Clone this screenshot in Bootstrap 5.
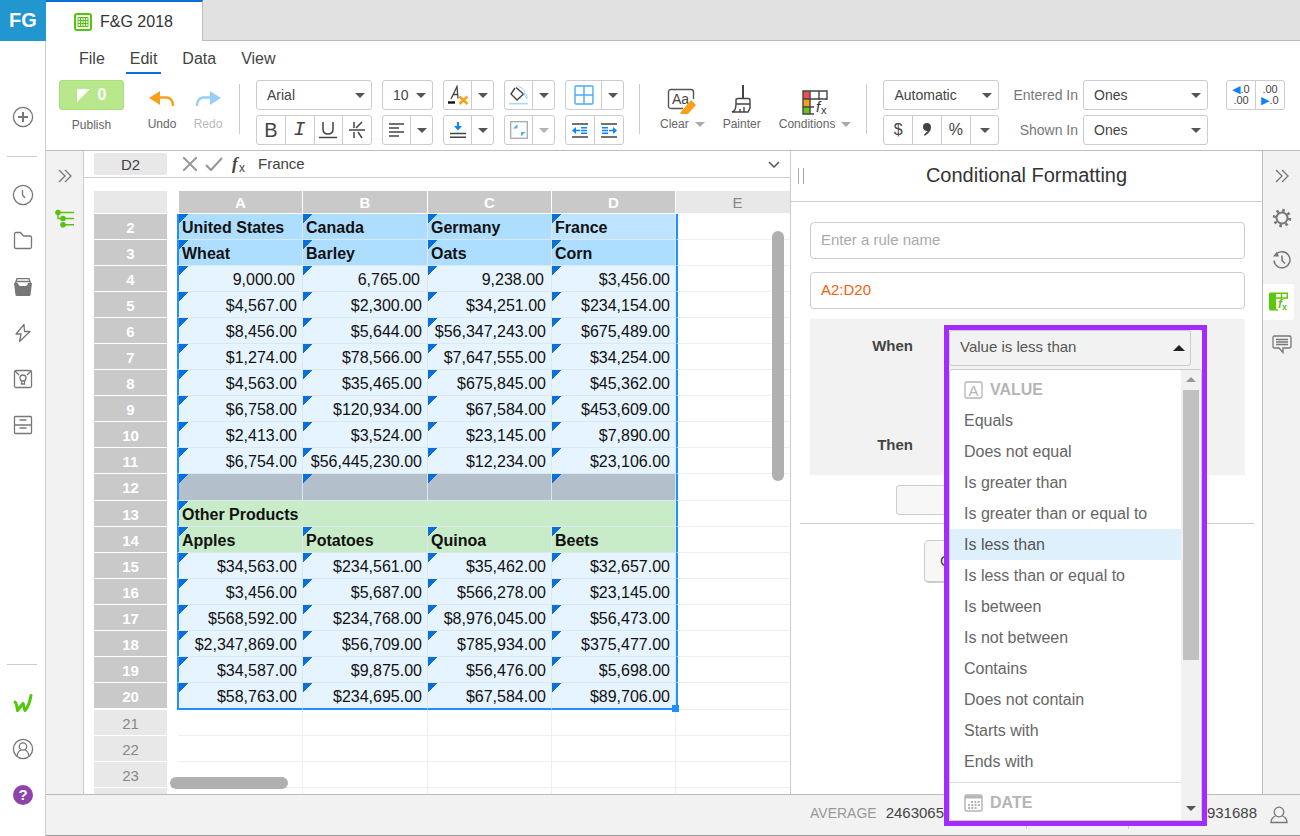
<!DOCTYPE html>
<html lang="en">
<head>
<meta charset="utf-8">
<meta name="viewport" content="width=device-width, initial-scale=1">
<title>F&amp;G 2018</title>
<link href="https://cdn.jsdelivr.net/npm/bootstrap@5.3.0/dist/css/bootstrap.min.css" rel="stylesheet">
<style>
body{font-family:"Liberation Sans",Arial,sans-serif;font-size:14px;line-height:20px;color:#444;background:#fff}
svg{display:block;flex:none}
.line-ico{fill:none;stroke:#777;stroke-width:1.3}
button,a.slot{border:0;background:none;padding:0;color:inherit;text-decoration:none}
/* left navigation */
.nav-rail{width:46px;border-right:1px solid #ccc;flex:none}
.brand-box{height:41px;background:#2196cf;color:#fff;font-size:20px;font-weight:700;margin-right:-1px;padding-bottom:2px}
.slot{height:46px;display:flex;align-items:center;justify-content:center}
.nav-rail .gap-top{margin-top:53px}
.rail-line{width:30px;height:1px;background:#ccc;margin:16px auto 15px 7px;flex:none}
.rail-foot{height:18px;flex:none}
/* tabs and menu */
.tab-strip{background:#e1e1e1;height:41px;border-bottom:1px solid #bbb}
.doc-tab{width:157px;height:41px;background:#fff;border-top:2px solid #0a6fd8;border-right:1px solid #bbb;font-size:16px;padding-left:28px;gap:8px;color:#333}
.menu-row{height:39px;padding-left:33px;gap:25px;font-size:16px;color:#444}
.menu-row a{color:inherit;text-decoration:none;height:31px;line-height:36px}
.menu-row a.current{box-shadow:0 2px 0 #0a6fd8;padding:0 4px;margin:0 -4px}
/* toolbar */
.tools{height:71px;padding-left:13px;border-bottom:1px solid #bfbfbf;gap:10px}
.pair{display:flex;flex-direction:column;gap:5px}
.tool-select,.tool-group{height:30px;border:1px solid #ccc;border-radius:3px;background-color:#fff}
.tool-select{appearance:none;font-size:14px;color:#444;padding:0 10px;background-image:url("data:image/svg+xml,%3Csvg xmlns='http://www.w3.org/2000/svg' width='10' height='5'%3E%3Cpath fill='%23555' d='M0 0h10L5 5z'/%3E%3C/svg%3E");background-repeat:no-repeat;background-position:right 6px center}
.tool-group{display:flex}
.tool-group button{flex:1 1 0;display:flex;align-items:center;justify-content:center;border-right:1px solid #ccc}
.tool-group button:last-child{border-right:0}
.tool-group .drop{flex:0 0 21px}
.w-115{width:116px}.w-50px{width:51px}.w-58{width:59px}.w-124{width:125px}
.caret{width:0;height:0;border:5px solid transparent;border-top-color:#555;border-bottom:0}
.faded{opacity:.45}
.tool-rule{width:1px;height:50px;background:#ccc;margin:4px 6px 0 5px}
.publish{width:65px;height:30px;border-radius:3px;background:#b9e78c;color:#fff;font-weight:700;font-size:16px;gap:8px;border:1px solid #a9de78;margin-bottom:7px}
.cap{font-size:12px;line-height:16px;color:#666}
.cap-drop{gap:6px}
.big-tool{display:flex;flex-direction:column;align-items:center}
.big-tool.step{padding-top:9px;width:32px}
.big-tool.step .cap{margin-top:9px}
.glyph{font-size:20px;color:#444}
.mono{font-family:"Liberation Mono",monospace}
.dec{font-size:11px;line-height:11px;flex-direction:column}
.azure{color:#0a84ff}
.pair label{height:30px;padding-top:5px;color:#777}
.pair.joined{margin-left:-5px}
/* work area */
.side-rail{width:38px;background:#f2f2f2;border-right:1px solid #ccc;flex:none}
.side-rail .slot{height:42px}
.right-rail{width:38px;background:#f2f2f2;border-left:1px solid #bbb;padding-top:4px;flex:none}
.right-rail .slot{height:42px}
.right-rail .lit{background:#fff;width:31px;height:36px;margin:3px 6px 3px 0;border-radius:0 3px 3px 0}
.formula{height:28px;border-bottom:1px solid #ccc;padding:0 10px 0 10px;font-size:15px}
.cell-name{width:73px;height:22px;background:#e8e8e8;border:0;border-radius:2px;text-align:center;color:#444;font-size:15px}
.formula-text{border:0;font-size:15px;color:#444;padding:0 0 0 7px;outline:0;min-width:0}
.sheet-box{position:relative;overflow:hidden;padding:13px 0 0 10px}
.sheet{table-layout:fixed;border-collapse:separate;border-spacing:0;width:calc(100% + 10px);font-size:16px;line-height:22px;color:#111}
.sheet th,.sheet td{height:26px;padding:2px 0 0;white-space:nowrap;overflow:hidden;border:0 solid #fff;border-bottom-width:1px;border-right-width:1px}
.sheet th{background:#c9c9c9;color:#fff;font-size:15px;font-weight:700;text-align:center;background-clip:padding-box}
.sheet thead th{height:23px;line-height:20px}
.sheet th.rownum{border-right:10px solid #fff;border-bottom-width:1px}
.sheet th.plain{background-color:#e8e8e8;color:#888;font-weight:400}
.sheet .c-row{width:83px}.sheet .c-a{width:126px}.sheet .c-b{width:125px}.sheet .c-c{width:124px}
.sheet thead th.first{border-left:2px solid #fff}
.sheet td{border-color:#efefef}
.sheet td.first{border-left:2px solid #fff}
.sheet .pick td{border-color:#dbe8f2;text-align:right;padding-right:5px;background-color:#e6f4ff}
.sheet .pick td.mark-tl{background-image:linear-gradient(135deg,#0a6fd8 50%,transparent 51%);background-size:10px 9px;background-repeat:no-repeat}
.sheet .pick td.first{border-left-color:#1e90ff}
.sheet .pick td.edge{background:none;border-left:2px solid #1e90ff;border-color:#efefef #efefef #efefef #1e90ff}
.sheet .bare td{padding-right:7px}
.sheet .bare td:nth-child(5){padding-right:5px}
.sheet .heading td{text-align:left;font-weight:700;padding:2px 0 0 3px}
.sheet .blue td{background-color:#addeff}
.sheet .blue td.active-cell{background-color:#bfe4ff}
.sheet .green td{background-color:#c8ebc8}
.sheet .grey td{height:27px;background-color:#b3bfcb}
.sheet .end td:not(.edge){border-bottom:2px solid #1e90ff}
.sheet .end td:nth-child(5){position:relative;overflow:visible}
.sheet .end>*{height:27px}
.sheet .end th{border-bottom-width:2px}
.handle{position:absolute;right:-4px;bottom:-4px;width:7px;height:7px;background:#1e90ff}
.bar-v{position:absolute;right:6px;top:53px;width:12px;height:250px;border-radius:6px;background:#b0b0b0}
.bar-h{position:absolute;left:86px;bottom:5px;width:118px;height:12px;border-radius:6px;background:#b0b0b0}
/* rule panel */
.rule-panel{width:472px;border-left:1px solid #ccc;flex:none}
.panel-title{height:51px;border-bottom:1px solid #ccc;font-size:20px;color:#333;position:relative;padding-bottom:3px}
.grip{position:absolute;left:7px;top:17px;width:6px;height:16px;border:solid #aaa;border-width:0 1px}
.rule-body{padding:20px 17px 0 19px}
.rule-field{height:37px;font-size:15px;border:1px solid #ccc;border-radius:4px;padding:0 10px 2px;margin-bottom:13px;color:#444}
.rule-field::placeholder{color:#aaa}
.rule-field.range{color:#f4600c;margin-bottom:10px}
.rule-set{height:156px;background:#f2f2f2;position:relative;font-size:15px;font-weight:700;color:#444;padding:17px 332px 0 0;text-align:right}
.rule-set label{display:block;margin-bottom:79px}
.chooser{position:absolute;left:134px;top:6px;width:263px;border:5px solid #a32bff;background:#f2f2f2;z-index:5;font-weight:400;text-align:left}
.chooser-select{appearance:none;display:block;width:242px;height:36px;font-size:15px;color:#555;border:1px solid #ccc;border-radius:3px;padding:0 10px 2px;background:#f2f2f2 url("data:image/svg+xml,%3Csvg xmlns='http://www.w3.org/2000/svg' width='12' height='6'%3E%3Cpath fill='%23222' d='M0 6h12L6 0z'/%3E%3C/svg%3E") no-repeat right 5px center}
.chooser-list{margin-top:3px;border:1px solid #ccc;border-radius:3px;background:#fff;font-size:16px;color:#666;height:452px;overflow:hidden}
.chooser-list ul{padding:4px 0 0}
.chooser-list li>button{display:block;width:100%;height:31px;line-height:31px;padding-left:14px;text-align:left}
.chooser-list li>button.chosen{background:#dff0fd;color:#555}
.kind{height:31px;font-weight:700;font-size:16px;color:#b5b5b5;padding-left:14px;gap:7px}
.kind.second{border-top:1px solid #ddd;margin-top:5px;height:40px}
.mini-bar{width:20px;background:#f1f1f1;padding:7px 2px 9px;flex:none}
.mini-thumb{width:16px;height:270px;background:#c1c1c1;margin-top:8px}
.caret.up{border:5px solid transparent;border-bottom-color:#999;border-top:0}
.add-rule{display:block;height:30px;width:260px;margin:10px auto 8px 86px;border:1px solid #ccc;border-radius:3px;background:#f7f7f7}
.panel-line{height:1px;background:#ccc;margin:0 -9px 16px -10px}
.cancel{display:block;width:98px;height:43px;margin-left:114px;border:1px solid #ccc;border-bottom-width:2px;border-radius:5px;background:#f7f7f7;font-size:15px;padding-left:15px;text-align:left}
/* status */
.status{height:43px;background:#f2f2f2;border-top:1px solid #bbb;border-bottom:1px solid #999;font-size:15px;padding:0 12px 4px 0;color:#444}
.status .tag-name{font-size:14px;color:#999;margin-right:9px}
.stat-a{width:216px}.stat-b{width:102px;height:32px;border-left:1px solid #ccc}.stat-c{width:129px;height:32px;border-left:1px solid #ccc;line-height:32px;text-align:right}
.stat-user{margin:3px 0 0 13px}
.shrinkable{min-width:0;min-height:0}
</style>
</head>
<body>
<div class="vh-100 d-flex overflow-hidden">
  <nav class="nav-rail d-flex flex-column" aria-label="Workspace">
    <div class="brand-box d-flex align-items-center justify-content-center">FG</div>
    <button class="slot gap-top" aria-label="Create"><svg width="22" height="22" class="line-ico" viewBox="0 0 22 22"><circle cx="11" cy="11" r="9.6"/><path d="M11 6v10M6 11h10" stroke-width="2"/></svg></button>
    <div class="rail-line"></div>
    <button class="slot" aria-label="Recent"><svg width="22" height="22" class="line-ico" viewBox="0 0 22 22"><circle cx="11" cy="11" r="9.6"/><path d="M10.5 6v5l2.5 3"/></svg></button>
    <button class="slot" aria-label="Files"><svg width="20" height="20" class="line-ico" viewBox="0 0 20 20"><path d="M1.5 3q0-1.5 1.5-1.5h4.5l3 3.5H17q1.500 0 1.500 1.500V16q0 1.500-1.500 1.500H3q-1.500 0-1.500-1.500z"/></svg></button>
    <button class="slot" aria-label="Library"><svg width="20" height="20" viewBox="0 0 20 20"><path d="M2.500 6l1.500-4.300h12l1.500 4.300M3 4.500h14" class="line-ico"/><path d="M1 6h4q.5 3 2 3h6q1.500 0 2-3h4l-1.500 12q0 1-1.500 1H4q-1.500 0-1.500-1z" fill="#777"/></svg></button>
    <button class="slot" aria-label="Activity"><svg width="18" height="20" class="line-ico" viewBox="0 0 18 20"><path d="M10 1.500L2 11h5l-1.500 7.500L16 8.500h-5.500z" stroke-linejoin="round"/></svg></button>
    <button class="slot" aria-label="Secured"><svg width="20" height="20" class="line-ico" viewBox="0 0 20 20"><rect x="1.500" y="1.500" width="17" height="17" rx="1.500"/><path d="M2 2l4 4M18 2l-4 4M8.500 11.500V15h3v-3.500"/><circle cx="10" cy="9" r="3"/></svg></button>
    <button class="slot" aria-label="Drawers"><svg width="20" height="20" class="line-ico" viewBox="0 0 20 20"><rect x="1.500" y="1.500" width="17" height="17" rx="1"/><path d="M1.500 10h17M6.500 5h7M6.500 13h7"/></svg></button>
    <div class="rail-line mt-auto"></div>
    <button class="slot" aria-label="Home"><svg width="20" height="20" viewBox="0 0 20 20" fill="none" stroke="#4fc90a" stroke-width="3" stroke-linecap="round" stroke-linejoin="round"><path d="M2 9q1.500 1 2.500 8.500L10 10.500l2 7q4-4 6-15"/></svg></button>
    <button class="slot" aria-label="Account"><svg width="22" height="22" class="line-ico" viewBox="0 0 22 22"><circle cx="11" cy="11" r="9.600"/><circle cx="11" cy="8.500" r="3.700"/><path d="M5 18q1-5 4-6M17 18q-1-5-4-6"/></svg></button>
    <button class="slot" aria-label="Help"><svg width="20" height="20" viewBox="0 0 20 20"><circle cx="10" cy="10" r="10" fill="#8e44ad"/><text x="10" y="15" font-size="15" font-weight="700" fill="#fff" text-anchor="middle">?</text></svg></button>
    <div class="rail-foot"></div>
  </nav>

  <div class="flex-grow-1 d-flex flex-column shrinkable">
    <header>
      <div class="tab-strip"><div class="doc-tab d-flex align-items-center">
        <svg width="18" height="18" viewBox="0 0 18 18"><rect x="1" y="1" width="16" height="16" rx="2" fill="none" stroke="#55c40c" stroke-width="2"/><path d="M4 4.500h10v9H4zM4 7.500h10M4 10.500h10M6.500 4.500v9M9 4.500v9M11.500 4.500v9" fill="none" stroke="#55c40c"/></svg>
        <span>F&amp;G 2018</span></div></div>
      <nav class="menu-row d-flex" aria-label="Menu"><a href="#">File</a><a href="#" class="current">Edit</a><a href="#">Data</a><a href="#">View</a></nav>
      <div class="tools d-flex align-items-start">
        <div class="big-tool me-2"><button class="publish d-flex align-items-center justify-content-center"><svg width="13" height="13" viewBox="0 0 13 13"><path d="M0 0h13L0 13z" fill="#fff"/></svg>0</button><span class="cap">Publish</span></div>
        <button class="big-tool step ms-1"><svg width="26" height="18" viewBox="0 0 26 18"><path d="M0 9l11-7v14z" fill="#f9a01b"/><path d="M10 8.500h8q6 1 6 8.500" fill="none" stroke="#f9a01b" stroke-width="2.400"/></svg><span class="cap">Undo</span></button>
        <button class="big-tool step ms-1 faded"><svg width="26" height="18" viewBox="0 0 26 18"><path d="M26 9L15 2v14z" fill="#1a95f5"/><path d="M16 8.500H8q-6 1-6 8.500" fill="none" stroke="#1a95f5" stroke-width="2.400"/></svg><span class="cap">Redo</span></button>
        <div class="tool-rule"></div>
        <div class="pair">
          <select class="tool-select w-115" aria-label="Font"><option>Arial</option></select>
          <div class="tool-group w-115">
            <button class="glyph" aria-label="Bold">B</button>
            <button class="glyph fst-italic mono" aria-label="Italic">I</button>
            <button aria-label="Underline"><svg width="18" height="18" viewBox="0 0 18 18" fill="none" stroke="#444" stroke-width="1.500"><path d="M4 1v7q0 5 5 5t5-5V1M0 16.500h18"/></svg></button>
            <button aria-label="Strikethrough"><svg width="16" height="18" viewBox="0 0 16 18" fill="none" stroke="#444" stroke-width="1.500"><path d="M5 1v6M13 1L7 7M0 9h16M5 11v6M9 11l4 6"/></svg></button>
          </div>
        </div>
        <div class="pair">
          <select class="tool-select w-50px" aria-label="Font size"><option>10</option></select>
          <div class="tool-group w-50px"><button aria-label="Align"><svg width="16" height="14" stroke="#444" stroke-width="1.500"><path d="M0 1h15M0 5h10M0 9h15M0 13h10"/></svg></button><button class="drop" aria-label="Align options"><i class="caret"></i></button></div>
        </div>
        <div class="pair">
          <div class="tool-group w-50px"><button aria-label="Text colour"><svg width="20" height="20" viewBox="0 0 20 20" fill="none"><path d="M3 14L9 1.500l1 12M5.500 9.500h4" stroke="#444" stroke-width="1.300"/><path d="M0 17.500h7" stroke="#111" stroke-width="2.400"/><path d="M11.500 11.500l8 7.500m0-7.500l-8 7.500" stroke="#f9a01b" stroke-width="2.400"/></svg></button><button class="drop" aria-label="Text colours"><i class="caret"></i></button></div>
          <div class="tool-group w-50px"><button aria-label="Vertical align"><svg width="16" height="16" viewBox="0 0 16 16"><path d="M0 11.500h16M0 15.200h16" stroke="#444" stroke-width="1.500"/><path d="M7 0h2v4h3L8 8.500 4 4h3z" fill="#0a84ff"/></svg></button><button class="drop" aria-label="Vertical options"><i class="caret"></i></button></div>
        </div>
        <div class="pair">
          <div class="tool-group w-50px"><button aria-label="Fill"><svg width="20" height="20" viewBox="0 0 20 20" fill="none"><path d="M6 3l-4 6 6 6 6.500-6L7 2.500" stroke="#444" stroke-width="1.400"/><path d="M9 1q5 2 7 6M15 8q4 1 3 6l-3-5z" stroke="#9bd1f7"/><path d="M0 18.700h19" stroke="#a5d8fa" stroke-width="1.500"/></svg></button><button class="drop" aria-label="Fill colours"><i class="caret"></i></button></div>
          <div class="tool-group w-50px"><button aria-label="Merge"><svg width="18" height="18" viewBox="0 0 18 18"><rect x=".7" y=".7" width="16.600" height="16.600" fill="none" stroke="#aaa" stroke-width="1.300"/><path d="M3 7.500L7.500 3v4.500zM11 11h4.500L11 15.500z" fill="#50b3fa"/></svg></button><button class="drop faded" aria-label="Merge options"><i class="caret"></i></button></div>
        </div>
        <div class="pair">
          <div class="tool-group w-58"><button aria-label="Borders"><svg width="20" height="20" viewBox="0 0 20 20" fill="none" stroke="#4aacf5" stroke-width="1.400"><rect x="1" y="1" width="18" height="18" rx="1"/><path d="M10 1v18M1 10h18"/></svg></button><button class="drop" aria-label="Border options"><i class="caret"></i></button></div>
          <div class="tool-group w-58">
            <button aria-label="Outdent"><svg width="16" height="15" viewBox="0 0 16 15"><path d="M0 1h16M0 14h16" stroke="#444" stroke-width="1.500"/><path d="M2 7.500h6M9 4.800h6M9 7.500h6M9 10.200h6" stroke="#0a84ff" stroke-width="1.600"/><path d="M0 7.500L4 4v7z" fill="#0a84ff"/></svg></button>
            <button aria-label="Indent"><svg width="16" height="15" viewBox="0 0 16 15"><path d="M0 1h16M0 14h16" stroke="#444" stroke-width="1.500"/><path d="M8 7.500h6M1 4.800h6M1 7.500h6M1 10.200h6" stroke="#0a84ff" stroke-width="1.600"/><path d="M16 7.500L12 4v7z" fill="#0a84ff"/></svg></button>
          </div>
        </div>
        <div class="tool-rule"></div>
        <button class="big-tool pt-2 ms-1"><svg width="30" height="28" viewBox="0 0 30 28"><path d="M16 20.500H4q-2.500 0-2.500-2.500V4q0-2.500 2.500-2.500h20q2.500 0 2.500 2.500v7" fill="none" stroke="#555" stroke-width="1.400"/><text x="5" y="16" font-size="14" fill="#444">Aa</text><path d="M24 12l5 5-8 9h-7l-1-1z" fill="#f9a01b"/></svg><span class="cap cap-drop d-flex align-items-center">Clear <i class="caret opacity-50"></i></span></button>
        <button class="big-tool pt-1 ms-2"><svg width="22" height="32" viewBox="0 0 22 32" fill="none" stroke="#444" stroke-width="1.400"><path d="M12 1v13" stroke-width="2"/><path d="M5 20v-4q0-1.500 2-1.500h10q2 0 2 1.500v8l-2 4H1q4-1 4-8h14M9 28v-3M13 28v-5"/></svg><span class="cap">Painter</span></button>
        <button class="big-tool pt-2 ms-2"><svg width="26" height="28" viewBox="0 0 26 28"><path d="M1 3h7v8H1z" fill="#f04e4e"/><path d="M1 11h7v8H1z" fill="#f9a01b"/><path d="M1 19h7v7H1z" fill="#66c61c"/><path d="M12 26H1V3h24v9M8 3v23M17 3v9M1 11h24M1 19h11" fill="none" stroke="#444" stroke-width="1.400"/><text x="14" y="24" font-size="15" font-style="italic" fill="#333">f</text><text x="19" y="26" font-size="11" fill="#333">x</text></svg><span class="cap cap-drop d-flex align-items-center">Conditions <i class="caret opacity-50"></i></span></button>
        <div class="tool-rule"></div>
        <div class="pair">
          <select class="tool-select w-115" aria-label="Number format"><option>Automatic</option></select>
          <div class="tool-group w-115"><button class="fs-6">$</button><button aria-label="Thousands separator"><svg width="8" height="14" viewBox="0 0 8 14"><path d="M4 0q4 0 4 4.500T1.500 13q-1-1 .5-2.500T4.500 8Q0 8 0 4t4-4z" fill="#444"/></svg></button><button class="fs-6">%</button><button aria-label="More formats"><i class="caret"></i></button></div>
        </div>
        <div class="pair text-end text-nowrap ms-1"><label for="ent">Entered In</label><label for="shn">Shown In</label></div>
        <div class="pair joined">
          <select id="ent" class="tool-select w-124"><option>Ones</option></select>
          <select id="shn" class="tool-select w-124"><option>Ones</option></select>
        </div>
        <div class="tool-group w-58 ms-2"><button class="dec"><span><span class="azure">◀</span>.0</span><span>.00</span></button><button class="dec"><span>.00</span><span><span class="azure">▶</span>.0</span></button></div>
      </div>
    </header>

    <div class="flex-grow-1 d-flex shrinkable">
      <aside class="side-rail">
        <button class="slot w-100 pt-2" aria-label="Expand"><svg width="14" height="14" class="line-ico" viewBox="0 0 14 14"><path d="M1 1l6 6-6 6M7 1l6 6-6 6"/></svg></button>
        <button class="slot w-100 pt-2" aria-label="Outline"><svg width="19" height="19" viewBox="0 0 19 19" fill="#55c40c"><circle cx="3" cy="3.500" r="2.800"/><circle cx="8" cy="9.500" r="2.800"/><circle cx="8" cy="15.700" r="2.800"/><path d="M3 3.500h16M3 3v6.500h16M8 15.700h11" fill="none" stroke="#55c40c" stroke-width="1.400"/></svg></button>
      </aside>
      <main class="flex-grow-1 d-flex flex-column shrinkable">
        <div class="formula d-flex align-items-center">
          <input class="cell-name" aria-label="Cell" value="D2">
          <svg class="ms-3" width="14" height="14" viewBox="0 0 14 14" stroke="#999" stroke-width="2"><path d="M0 0l14 14M14 0L0 14"/></svg>
          <svg class="ms-2" width="18" height="14" viewBox="0 0 18 14" fill="none" stroke="#999" stroke-width="2.200"><path d="M1 8l5 5L17 1"/></svg>
          <svg class="ms-2" width="20" height="22" viewBox="0 0 20 22"><text x="1" y="16" font-size="17" font-style="italic" font-family="Liberation Serif" font-weight="700" fill="#444">f</text><text x="8" y="19" font-size="12" fill="#444">x</text></svg>
          <input class="formula-text flex-grow-1" aria-label="Formula" value="France">
          <svg width="12" height="7" viewBox="0 0 12 7" fill="none" stroke="#555" stroke-width="1.500"><path d="M1 1l5 5 5-5"/></svg>
        </div>
        <div class="sheet-box flex-grow-1">
          <table class="sheet">
            <colgroup><col class="c-row"><col class="c-a"><col class="c-b"><col class="c-c"><col class="c-c"><col></colgroup>
            <thead><tr><th class="rownum plain"></th><th class="first">A</th><th>B</th><th>C</th><th>D</th><th class="plain">E</th></tr></thead>
            <tbody id="rows"></tbody>
          </table>
          <div class="bar-v"></div><div class="bar-h"></div>
        </div>
      </main>
      <section class="rule-panel">
        <div class="panel-title d-flex align-items-center justify-content-center"><span class="grip"></span>Conditional Formatting</div>
        <div class="rule-body">
          <input class="rule-field w-100" placeholder="Enter a rule name" aria-label="Rule name">
          <input class="rule-field range w-100" value="A2:D20" aria-label="Range">
          <div class="rule-set">
            <label for="when">When</label><span>Then</span>
            <div class="chooser">
              <select id="when" class="chooser-select"><option>Value is less than</option></select>
              <div class="chooser-list d-flex">
                <ul class="list-unstyled flex-grow-1 mb-0">
                  <li class="kind d-flex align-items-center"><svg width="19" height="18" viewBox="0 0 19 18"><rect x="1" y="1" width="17" height="16" rx="1.500" fill="none" stroke="#b5b5b5" stroke-width="1.300"/><text x="9.500" y="14.500" font-size="15" font-weight="400" fill="#b5b5b5" text-anchor="middle">A</text></svg>VALUE</li>
                  <li><button>Equals</button></li><li><button>Does not equal</button></li><li><button>Is greater than</button></li><li><button>Is greater than or equal to</button></li><li><button class="chosen">Is less than</button></li><li><button>Is less than or equal to</button></li><li><button>Is between</button></li><li><button>Is not between</button></li><li><button>Contains</button></li><li><button>Does not contain</button></li><li><button>Starts with</button></li><li><button>Ends with</button></li>
                  <li class="kind second d-flex align-items-center"><svg width="19" height="18" viewBox="0 0 19 18"><rect x="1" y="1" width="17" height="16" rx="1.500" fill="none" stroke="#b5b5b5" stroke-width="1.500"/><path d="M1 3h17" stroke="#b5b5b5" stroke-width="3"/><path d="M7 8h9M4 11h12M4 14h9" stroke="#b5b5b5" stroke-width="1.800" stroke-dasharray="2 1.300"/></svg>DATE</li>
                </ul>
                <div class="mini-bar d-flex flex-column align-items-center"><i class="caret up"></i><div class="mini-thumb"></div><i class="caret mt-auto"></i></div>
              </div>
            </div>
          </div>
          <button class="add-rule" aria-label="Add format"></button>
          <div class="panel-line"></div>
          <button class="cancel">Cancel</button>
        </div>
      </section>
      <aside class="right-rail">
        <button class="slot w-100" aria-label="Collapse"><svg width="14" height="14" class="line-ico" viewBox="0 0 14 14"><path d="M1 1l6 6-6 6M7 1l6 6-6 6"/></svg></button>
        <button class="slot w-100" aria-label="Settings"><svg width="20" height="20" viewBox="0 0 20 20" fill="none" stroke="#777"><circle cx="10" cy="10" r="5.500" stroke-width="2"/><circle cx="10" cy="10" r="7.700" stroke-width="3" stroke-dasharray="2.500 3.550"/></svg></button>
        <button class="slot w-100" aria-label="History"><svg width="20" height="20" class="line-ico" viewBox="0 0 20 20"><path d="M4 4.500a8 8 0 1 1-2 6M10 5.500v5l3 3" stroke-width="1.500"/><path d="M1 6.500h6L5 1.500z" fill="#777" stroke="none"/></svg></button>
        <button class="slot lit" aria-label="Conditional formatting"><svg width="20" height="20" viewBox="0 0 20 20"><path d="M0 2q0-1.500 1.500-1.500H7v18H1.500Q0 18.500 0 17z" fill="#5cc80c"/><path d="M7 1.200h11.300V7M7 6h11M12.500 1v5M7 18h2" fill="none" stroke="#5cc80c" stroke-width="1.400"/><text x="9" y="16" font-size="12" font-style="italic" font-weight="700" fill="#5cc80c">f</text><text x="13" y="18" font-size="9" font-weight="700" fill="#5cc80c">x</text></svg></button>
        <button class="slot w-100" aria-label="Comments"><svg width="20" height="19" class="line-ico" viewBox="0 0 20 19"><path d="M2.500 1h15q1.500 0 1.500 1.500v9q0 1.500-1.500 1.500H11v4.500L7 13H2.500Q1 13 1 11.500v-9Q1 1 2.500 1zM4 4.500h12M4 7h12M4 9.500h12"/></svg></button>
      </aside>
    </div>
    <footer class="status d-flex align-items-center justify-content-end">
      <div class="stat-a text-nowrap"><span class="tag-name">AVERAGE</span><span>2463065</span></div><div class="stat-b"></div><div class="stat-c">931688</div>
      <svg width="18" height="18" class="line-ico stat-user" viewBox="0 0 18 18"><circle cx="9" cy="6" r="4.800"/><path d="M5.500 10Q1 12 1 16.500h16Q17 12 12.500 10"/></svg>
    </footer>
  </div>
</div>
<script>
const rows = [
  ["heading blue","United States","Canada","Germany","France"],
  ["heading blue","Wheat","Barley","Oats","Corn"],
  ["bare","9,000.00","6,765.00","9,238.00","$3,456.00"],
  ["","$4,567.00","$2,300.00","$34,251.00","$234,154.00"],
  ["","$8,456.00","$5,644.00","$56,347,243.00","$675,489.00"],
  ["","$1,274.00","$78,566.00","$7,647,555.00","$34,254.00"],
  ["","$4,563.00","$35,465.00","$675,845.00","$45,362.00"],
  ["","$6,758.00","$120,934.00","$67,584.00","$453,609.00"],
  ["","$2,413.00","$3,524.00","$23,145.00","$7,890.00"],
  ["","$6,754.00","$56,445,230.00","$12,234.00","$23,106.00"],
  ["grey","","","",""],
  ["heading green","Other Products"],
  ["heading green","Apples","Potatoes","Quinoa","Beets"],
  ["","$34,563.00","$234,561.00","$35,462.00","$32,657.00"],
  ["","$3,456.00","$5,687.00","$566,278.00","$23,145.00"],
  ["","$568,592.00","$234,768.00","$8,976,045.00","$56,473.00"],
  ["","$2,347,869.00","$56,709.00","$785,934.00","$375,477.00"],
  ["","$34,587.00","$9,875.00","$56,476.00","$5,698.00"],
  ["end","$58,763.00","$234,695.00","$67,584.00","$89,706.00"]
];
let html = "";
rows.forEach(([kind, ...cells], r) => {
  html += `<tr class="pick ${kind}"><th class="rownum">${r + 2}</th>`;
  cells.forEach((text, c) => {
    const cls = "mark-tl" + (c ? "" : " first") + (r === 0 && c === 3 ? " active-cell" : "");
    const knob = kind === "end" && c === 3 ? '<span class="handle"></span>' : "";
    html += `<td class="${cls}"${cells.length === 1 ? ' colspan="4"' : ""}>${text}${knob}</td>`;
  });
  html += '<td class="edge"></td></tr>';
});
for (const n of [21, 22, 23, ""])
  html += `<tr><th class="rownum plain">${n}</th><td class="first"></td><td></td><td></td><td></td><td></td></tr>`;
document.getElementById("rows").innerHTML = html;
</script>
<script src="https://cdn.jsdelivr.net/npm/bootstrap@5.3.0/dist/js/bootstrap.bundle.min.js"></script>
</body>
</html>
